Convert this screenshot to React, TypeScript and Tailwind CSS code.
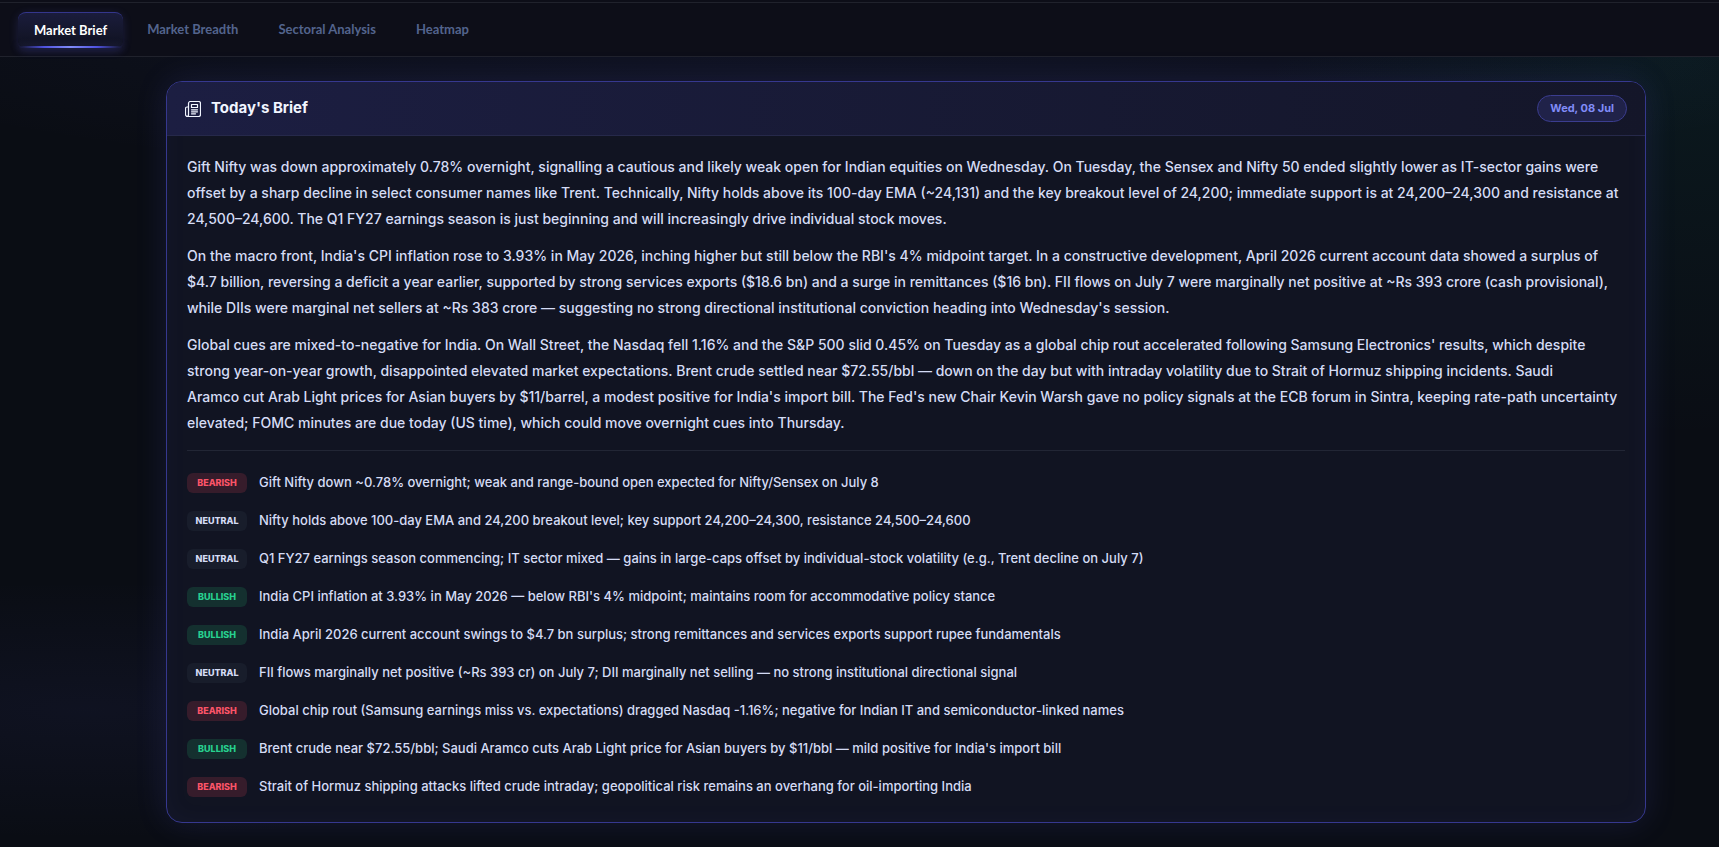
type Sentiment = "BEARISH" | "NEUTRAL" | "BULLISH";

const tabs = ["Market Brief", "Market Breadth", "Sectoral Analysis", "Heatmap"];

const paragraphs = [
  "Gift Nifty was down approximately 0.78% overnight, signalling a cautious and likely weak open for Indian equities on Wednesday. On Tuesday, the Sensex and Nifty 50 ended slightly lower as IT-sector gains were offset by a sharp decline in select consumer names like Trent. Technically, Nifty holds above its 100-day EMA (~24,131) and the key breakout level of 24,200; immediate support is at 24,200–24,300 and resistance at 24,500–24,600. The Q1 FY27 earnings season is just beginning and will increasingly drive individual stock moves.",
  "On the macro front, India's CPI inflation rose to 3.93% in May 2026, inching higher but still below the RBI's 4% midpoint target. In a constructive development, April 2026 current account data showed a surplus of $4.7 billion, reversing a deficit a year earlier, supported by strong services exports ($18.6 bn) and a surge in remittances ($16 bn). FII flows on July 7 were marginally net positive at ~Rs 393 crore (cash provisional), while DIIs were marginal net sellers at ~Rs 383 crore — suggesting no strong directional institutional conviction heading into Wednesday's session.",
  "Global cues are mixed-to-negative for India. On Wall Street, the Nasdaq fell 1.16% and the S&P 500 slid 0.45% on Tuesday as a global chip rout accelerated following Samsung Electronics' results, which despite strong year-on-year growth, disappointed elevated market expectations. Brent crude settled near $72.55/bbl — down on the day but with intraday volatility due to Strait of Hormuz shipping incidents. Saudi Aramco\u00a0cut Arab Light prices for Asian buyers by $11/barrel, a modest positive for India's import bill. The Fed's new Chair Kevin Warsh gave no policy signals at the ECB forum in Sintra, keeping rate-path uncertainty elevated; FOMC minutes are due today (US time), which could move overnight cues into Thursday.",
];

const points: { tag: Sentiment; text: string }[] = [
  { tag: "BEARISH", text: "Gift Nifty down ~0.78% overnight; weak and range-bound open expected for Nifty/Sensex on July 8" },
  { tag: "NEUTRAL", text: "Nifty holds above 100-day EMA and 24,200 breakout level; key support 24,200–24,300, resistance 24,500–24,600" },
  { tag: "NEUTRAL", text: "Q1 FY27 earnings season commencing; IT sector mixed — gains in large-caps offset by individual-stock volatility (e.g., Trent decline on July 7)" },
  { tag: "BULLISH", text: "India CPI inflation at 3.93% in May 2026 — below RBI's 4% midpoint; maintains room for accommodative policy stance" },
  { tag: "BULLISH", text: "India April 2026 current account swings to $4.7 bn surplus; strong remittances and services exports support rupee fundamentals" },
  { tag: "NEUTRAL", text: "FII flows marginally net positive (~Rs 393 cr) on July 7; DII marginally net selling — no strong institutional directional signal" },
  { tag: "BEARISH", text: "Global chip rout (Samsung earnings miss vs. expectations) dragged Nasdaq -1.16%; negative for Indian IT and semiconductor-linked names" },
  { tag: "BULLISH", text: "Brent crude near $72.55/bbl; Saudi Aramco cuts Arab Light price for Asian buyers by $11/bbl — mild positive for India's import bill" },
  { tag: "BEARISH", text: "Strait of Hormuz shipping attacks lifted crude intraday; geopolitical risk remains an overhang for oil-importing India" },
];

const tagStyles: Record<Sentiment, string> = {
  BEARISH: "bg-[#361c2b] text-[#fb5468]",
  NEUTRAL: "bg-[#181d2b] text-[#d5dcf5]",
  BULLISH: "bg-[#14302f] text-[#27d08f]",
};

const NewsIcon = () => (
  <svg viewBox="0 0 16 16" className="size-4" fill="none" stroke="currentColor" strokeWidth="1.2" strokeLinecap="round" strokeLinejoin="round" aria-hidden="true">
    <path d="M3.5 13.5v-11a2 2 0 0 1 2-2h8a2 2 0 0 1 2 2v11a2 2 0 0 1-2 2h-11a2 2 0 0 1-2-2v-6A1.5 1.5 0 0 1 2 6h1.5" />
    <path d="M3.5 13.5A1.5 1.5 0 0 1 2 15.3" />
    <path d="M6.5 3.5h6v3h-6zM6.5 8.8h6M6.5 10.8h6M6.5 12.8h4" />
  </svg>
);

const App = () => {
  return (
    <div className="min-h-screen bg-[#0a0d14] bg-[radial-gradient(ellipse_420px_380px_at_98%_60px,#14b8a612,transparent),radial-gradient(ellipse_1100px_160px_at_50%_30px,#6366f114,transparent),radial-gradient(ellipse_600px_130px_at_5%_710px,#6366f10f,transparent)] font-[Inter,sans-serif] text-[#d5dcf5]">
      <nav className="border-b border-[#20222c] bg-[#0d0e18] pt-0.5">
        <div className="flex items-center gap-2 border-t border-[#20222c] px-[18px] pt-[9px] pb-2 font-[Lato,sans-serif] text-[13px] font-bold">
          {tabs.map((tab, ind) => (
            <button
              key={tab}
              className={
                ind === 0
                  ? "relative h-9 rounded-lg border-t border-[#34368c] bg-linear-to-b from-[#1a1c3c] to-[#10121f] px-4 text-white shadow-[0_2px_10px_#6366f130]"
                  : "h-9 px-4 text-[#53648d]"
              }
            >
              {tab}
              {ind === 0 && (
                <span className="absolute inset-x-0 bottom-0 h-0.5 bg-[linear-gradient(90deg,transparent,#4f52e0_25%,#818cf8,#4f52e0_75%,transparent)] shadow-[0_1px_8px_#6366f160]" />
              )}
            </button>
          ))}
        </div>
      </nav>

      <main className="pt-6 pr-[73px] pb-6 pl-[166px]">
        <section className="overflow-hidden rounded-2xl border border-[#36388f] bg-[#111422] shadow-[0_0_32px_#6366f124,inset_0_0_24px_#6366f10c]">
          <header className="flex h-[54px] items-center justify-between border-b border-[#26294a] bg-linear-to-r from-[#1c1e42] to-[#141629] px-[18px]">
            <h1 className="flex items-center gap-2.5 text-[15px] font-bold text-[#f1f5ff]">
              <NewsIcon />
              Today's Brief
            </h1>
            <time dateTime="2026-07-08" className="rounded-full border border-[#3b3d8f] bg-[#202249] px-3 text-[11px] leading-[25px] font-bold text-[#818cf8]">
              Wed, 08 Jul
            </time>
          </header>

          <div className="px-5 pt-[18px] pb-4">
            <div className="flex flex-col gap-[11px] border-b border-[#222635] pb-3.5 text-sm leading-[26px] font-medium">
              {paragraphs.map((text, ind) => (
                <p key={ind}>{text}</p>
              ))}
            </div>

            <ul className="pt-[13px]">
              {points.map((point, ind) => (
                <li key={ind} className="flex h-[38px] items-center gap-3 text-[13px] font-medium">
                  <span className={`${tagStyles[point.tag]} w-[60px] shrink-0 rounded-md text-center text-[9px] leading-5 font-extrabold`}>
                    {point.tag}
                  </span>
                  <span>{point.text}</span>
                </li>
              ))}
            </ul>
          </div>
        </section>
      </main>
    </div>
  );
};

export default App;
